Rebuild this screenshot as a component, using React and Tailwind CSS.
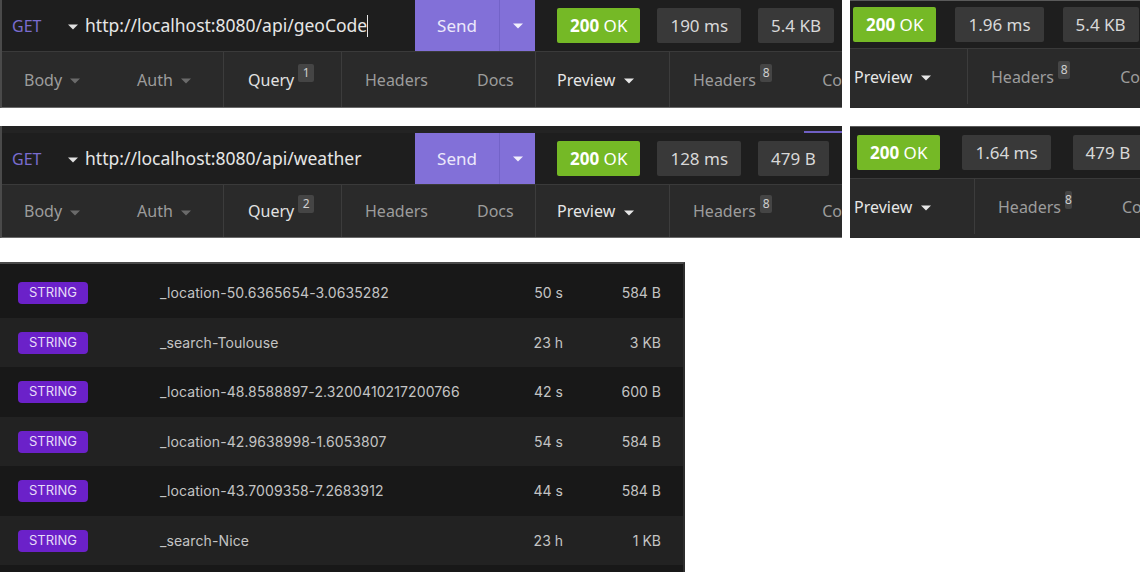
import React from "react"

const caret = (color) => (
    <svg width="10" height="6" viewBox="0 0 10 6" className="inline-block">
        <path d="M0 0.5 L10 0.5 L5 5.5 Z" fill={color} />
    </svg>
)

function StatusBadges({ time, size, gap = "gap-[17px]" }) {
    return (
        <div className={`flex items-center ${gap}`}>
            <div className="h-[35px] px-[13px] flex items-center bg-[#75b926] text-white text-[17px] rounded-[2px]">
                <span className="font-bold">200</span>&nbsp;OK
            </div>
            <div className="h-[35px] px-[13px] flex items-center bg-[#393939] text-[#d8d8d8] text-[17px] rounded-[2px]">{time}</div>
            <div className="h-[35px] px-[13px] flex items-center bg-[#393939] text-[#d8d8d8] text-[17px] rounded-[2px]">{size}</div>
        </div>
    )
}

function Count({ n }) {
    return (
        <span className="ml-[4px] -mt-[14px] inline-flex items-center justify-center w-[16px] h-[18px] rounded-[2px] bg-[#454545] text-[#d0d0d0] text-[12px]">{n}</span>
    )
}

function RequestPanel({ url, query, time, size, cursor, strip }) {
    return (
        <div className="w-[842px] flex flex-col bg-[#2a2a2a] border-l-2 border-[#4a4a4a] border-b border-b-[#6a6a6a]">
            {strip && (
                <div className="h-[7px] bg-[#232323] flex items-end justify-end">
                    <div className="w-[38px] h-[2px] bg-[#6f5fc4]" />
                </div>
            )}
            {/* url bar */}
            <div className="h-[52px] flex bg-[#1e1e1e] border-b border-[#3a3a3a]">
                <div className="w-[413px] flex items-center pl-[10px] whitespace-nowrap">
                    <span className="text-[#7a6ccf] text-[16px] w-[50px]">GET</span>
                    <span className="ml-[6px] mr-[7px]">{caret("#e0e0e0")}</span>
                    <span className="text-[#e6e6e6] text-[17.5px]">{url}</span>
                    {cursor && <span className="w-[1px] h-[22px] bg-[#e6e6e6]" />}
                </div>
                <div className="w-[120px] flex bg-[#8270d8] text-[#ece8fb]">
                    <div className="w-[84px] flex items-center justify-center text-[17px]">Send</div>
                    <div className="flex-1 border-l border-[#7363c8] flex items-center justify-center">{caret("#f2f0fc")}</div>
                </div>
                <div className="flex-1 flex items-center pl-[22px]">
                    <StatusBadges time={time} size={size} />
                </div>
            </div>
            {/* tabs */}
            <div className="flex-1 flex text-[16px] text-[#9c9c9c]">
                <div className="w-[221px] shrink-0 flex items-center pl-[22px]">
                    <span>Body</span>
                    <span className="ml-[8px] mr-[57px]">{caret("#6a6a6a")}</span>
                    <span>Auth</span>
                    <span className="ml-[8px]">{caret("#6a6a6a")}</span>
                </div>
                <div className="w-[118px] shrink-0 border-l border-[#3c3c3c] flex items-center pl-[24px] text-[#e2e2e2]">
                    Query<Count n={query} />
                </div>
                <div className="w-[194px] shrink-0 border-l border-[#3c3c3c] flex items-center pl-[23px]">
                    <span>Headers</span>
                    <span className="ml-[49px]">Docs</span>
                </div>
                <div className="w-[134px] shrink-0 border-l border-[#3c3c3c] flex items-center pl-[21px] text-[#e6e6e6]">
                    Preview<span className="ml-[9px]">{caret("#e6e6e6")}</span>
                </div>
                <div className="flex-1 min-w-0 border-l border-[#3c3c3c] flex items-center pl-[23px] overflow-hidden whitespace-nowrap">
                    Headers<Count n="8" />
                    <span className="ml-[50px]">Co</span>
                </div>
            </div>
        </div>
    )
}

function ResponsePane({ time, size, topH, padL, divX, gap }) {
    return (
        <div className="w-[290px] flex flex-col bg-[#2a2a2a] border-t border-[#5a5a5a] overflow-hidden">
            <div className={`${topH} flex items-center bg-[#1e1e1e] border-b border-[#3a3a3a] ${padL} whitespace-nowrap`}>
                <StatusBadges time={time} size={size} gap={gap} />
            </div>
            <div className="flex-1 flex text-[16px] text-[#9c9c9c] whitespace-nowrap pb-[4px]">
                <div className={`${divX} shrink-0 flex items-center pl-[4px] text-[#e6e6e6]`}>
                    Preview<span className="ml-[9px]">{caret("#e6e6e6")}</span>
                </div>
                <div className="flex-1 min-w-0 overflow-hidden border-l border-[#3c3c3c] flex items-center pl-[23px]">
                    Headers<Count n="8" />
                    <span className="ml-[50px]">Co</span>
                </div>
            </div>
        </div>
    )
}

const keys = [
    { key: "_location-50.6365654-3.0635282", ttl: "50 s", size: "584 B" },
    { key: "_search-Toulouse", ttl: "23 h", size: "3 KB" },
    { key: "_location-48.8588897-2.3200410217200766", ttl: "42 s", size: "600 B" },
    { key: "_location-42.9638998-1.6053807", ttl: "54 s", size: "584 B" },
    { key: "_location-43.7009358-7.2683912", ttl: "44 s", size: "584 B" },
    { key: "_search-Nice", ttl: "23 h", size: "1 KB" },
]

function KeyList() {
    return (
        <div className="w-[685px] h-[310px] bg-[#181818] border-t-2 border-[#4a4a4a] border-r-2 border-r-[#2e2e2e] pt-[4px] font-['Inter',sans-serif]">
            {keys.map((k, i) => (
                <div
                    key={k.key}
                    className={`h-[49.5px] flex items-center text-[14px] text-[#c4c4c4] ${i % 2 === 1 ? "bg-[#222222]" : "bg-[#181818]"}`}
                >
                    <div className="w-[160px] pl-[18px]">
                        <span className="inline-flex items-center justify-center w-[70px] h-[22px] rounded-[4px] bg-[#6b21c9] text-[#e6dcf7] text-[13px]">STRING</span>
                    </div>
                    <div className="flex-1 tracking-[0.1px]">{k.key}</div>
                    <div className="w-[60px] text-right">{k.ttl}</div>
                    <div className="w-[120px] text-right pr-[22px]">{k.size}</div>
                </div>
            ))}
        </div>
    )
}

export default function App() {
    return (
        <div className="w-[1140px] h-[572px] bg-white overflow-hidden font-['Noto_Sans',sans-serif]">
            <div className="flex gap-[8px] h-[108px]">
                <RequestPanel url="http://localhost:8080/api/geoCode" query="1" time="190 ms" size="5.4 KB" cursor />
                <ResponsePane time="1.96 ms" size="5.4 KB" topH="h-[48px]" padL="pl-[3px]" divX="w-[117px]" gap="gap-[19px]" />
            </div>
            <div className="flex gap-[8px] h-[112px] mt-[18px]">
                <RequestPanel url="http://localhost:8080/api/weather" query="2" time="128 ms" size="479 B" strip />
                <ResponsePane time="1.64 ms" size="479 B" topH="h-[52px]" padL="pl-[7px]" divX="w-[124px]" gap="gap-[22px]" />
            </div>
            <div className="mt-[24px]">
                <KeyList />
            </div>
        </div>
    )
}
